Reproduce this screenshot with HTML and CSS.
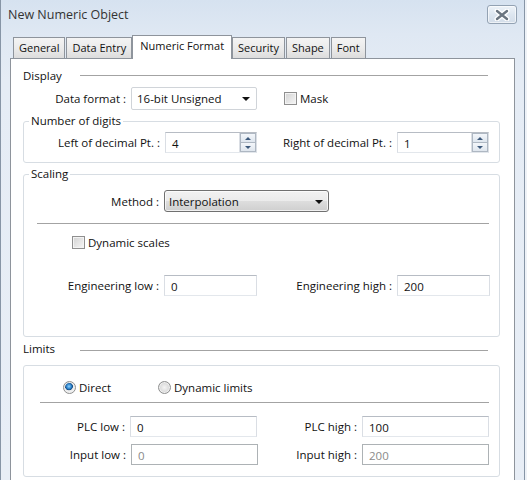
FILE: index.html
```html
<!DOCTYPE html>
<html>
<head>
<meta charset="utf-8">
<title>New Numeric Object</title>
<link rel="stylesheet" href="styles.css">
</head>
<body>
<div class="window">
  <div class="titlebar">
    <span class="title">New Numeric Object</span>
    <div class="close">
      <svg width="16" height="12" viewBox="0 0 16 12">
        <path d="M3 2 L13 10 M13 2 L3 10" stroke="#ffffff" stroke-width="5" stroke-linecap="round"/>
        <path d="M3 2 L13 10 M13 2 L3 10" stroke="#6b7580" stroke-width="2.4" stroke-linecap="round"/>
      </svg>
    </div>
  </div>
  <div class="tabs">
    <div class="tab">General</div>
    <div class="tab">Data Entry</div>
    <div class="tab active">Numeric Format</div>
    <div class="tab">Security</div>
    <div class="tab">Shape</div>
    <div class="tab">Font</div>
  </div>
  <div class="panel">
    <div class="heading"><span class="heading-text">Display</span><span class="rule"></span></div>
    <div class="row row-format">
      <span class="lbl lbl-format">Data format :</span>
      <div class="combo">
        <span>16-bit Unsigned</span>
        <span class="arrow"></span>
      </div>
      <span class="check check-mask"></span>
      <span class="check-text">Mask</span>
    </div>

    <fieldset class="group group-digits">
      <legend>Number of digits</legend>
      <div class="row">
        <span class="lbl lbl-left">Left of decimal Pt. :</span>
        <div class="field spin-field"><span class="val">4</span>
          <div class="spinner"><span class="sp-btn"><span class="up"></span></span><span class="sp-btn"><span class="down"></span></span></div>
        </div>
        <span class="lbl lbl-right">Right of decimal Pt. :</span>
        <div class="field spin-field"><span class="val">1</span>
          <div class="spinner"><span class="sp-btn"><span class="up"></span></span><span class="sp-btn"><span class="down"></span></span></div>
        </div>
      </div>
    </fieldset>

    <fieldset class="group group-scaling">
      <legend>Scaling</legend>
      <div class="row">
        <span class="lbl lbl-method">Method :</span>
        <div class="dropbtn"><span>Interpolation</span><span class="arrow"></span></div>
      </div>
      <div class="sep sep-scaling"></div>
      <div class="row row-dyn">
        <span class="check"></span><span class="check-text">Dynamic scales</span>
      </div>
      <div class="row row-eng">
        <span class="lbl lbl-englow">Engineering low :</span>
        <div class="field field-eng"><span class="val">0</span></div>
        <span class="lbl lbl-enghigh">Engineering high :</span>
        <div class="field field-eng"><span class="val">200</span></div>
      </div>
    </fieldset>

    <div class="heading heading-limits"><span class="heading-text">Limits</span><span class="rule"></span></div>

    <div class="group group-limits">
      <div class="row row-radios">
        <span class="radio-item radio-direct"><span class="radio checked"></span><span class="check-text">Direct</span></span>
        <span class="radio-item"><span class="radio"></span><span class="check-text">Dynamic limits</span></span>
      </div>
      <div class="sep sep-limits"></div>
      <div class="row row-plc">
        <span class="lbl lbl-plclow">PLC low :</span>
        <div class="field field-lim"><span class="val">0</span></div>
        <span class="lbl lbl-plchigh">PLC high :</span>
        <div class="field field-lim"><span class="val">100</span></div>
      </div>
      <div class="row row-input">
        <span class="lbl lbl-inlow">Input low :</span>
        <div class="field field-lim disabled"><span class="val">0</span></div>
        <span class="lbl lbl-inhigh">Input high :</span>
        <div class="field field-lim disabled"><span class="val">200</span></div>
      </div>
    </div>
  </div>
</div>
</body>
</html>
```

FILE: styles.css
```css
* { box-sizing: border-box; }

html, body {
  margin: 0;
  background: #eef2f7;
}

body {
  font-family: "Open Sans", "Noto Sans", sans-serif;
  font-size: 11.5px;
  color: #111;
}

.window {
  width: 525px;
  height: 480px;
  overflow: hidden;
  background: linear-gradient(#d6e2f0 0px, #dfe8f3 34px, #e5ecf5 80px, #e8eef6 480px);
  border-left: 1px solid #8795a6;
  border-right: 1px solid #8795a6;
}

/* Title bar */
.titlebar {
  height: 35px;
  display: flex;
  align-items: flex-start;
  justify-content: space-between;
  padding: 5px 7px 0 7px;
}

.title {
  font-size: 12.5px;
  color: #333;
  line-height: 20px;
}

.close {
  width: 30px;
  height: 19px;
  border: 1px solid #93a2b3;
  border-radius: 3px;
  background: linear-gradient(#eef3f9, #dde6f0 50%, #d3dde9);
  box-shadow: inset 0 0 0 1px rgba(255,255,255,0.6);
  display: flex;
  align-items: center;
  justify-content: center;
}

/* Tabs */
.tabs {
  height: 23px;
  display: flex;
  align-items: flex-end;
  padding-left: 12px;
  position: relative;
  z-index: 1;
  font-size: 11px;
}

.tab {
  height: 21px;
  line-height: 20px;
  padding: 0 5px;
  border: 1px solid #8e949c;
  border-bottom: none;
  margin-right: 1px;
  background: linear-gradient(#f4f4f4, #ebebeb 50%, #dcdcdc);
  color: #111;
}

.tab.active {
  height: 24px;
  margin-bottom: -1px;
  margin-left: -1px;
  margin-right: 0;
  padding: 0 7px;
  line-height: 19px;
  background: #fff;
}

/* Panel */
.panel {
  margin-left: 9px;
  width: 505px;
  height: 440px;
  border: 1px solid #8e949c;
  background: #fff;
  padding: 8px 14px 0 12px;
}

.heading {
  display: flex;
  align-items: center;
  height: 16px;
}

.heading-text {
  width: 57px;
  flex: none;
}

.rule {
  flex: 1;
  height: 1px;
  background: #a3a3a3;
  margin-right: 12px;
  margin-top: 1px;
}

.heading-limits .rule { margin-top: 5px; }

.row {
  display: flex;
  align-items: center;
}

.lbl {
  flex: none;
  text-align: right;
  padding-right: 5px;
  white-space: nowrap;
}

.row-format {
  margin-top: 4px;
}

.lbl-format { width: 108px; }

.combo {
  width: 126px;
  height: 23px;
  border: 1px solid #d0d4d9;
  border-radius: 2px;
  display: flex;
  align-items: center;
  justify-content: space-between;
  padding: 0 6px 0 5px;
}

.arrow {
  width: 0;
  height: 0;
  border-left: 4px solid transparent;
  border-right: 4px solid transparent;
  border-top: 4px solid #111;
  margin-top: 1px;
}

.check {
  width: 13px;
  height: 13px;
  flex: none;
  border: 1px solid #8f8f8f;
  background: linear-gradient(135deg, #d2d2d2, #f6f6f6);
  box-shadow: inset 0 0 0 1px #f3f3f3;
}

.check-mask { margin-left: 27px; }

.check-text {
  margin-left: 3px;
  white-space: nowrap;
}

/* Group boxes */
.group {
  margin: 0;
  padding: 0;
  border: 1px solid #d7dde3;
  border-radius: 3px;
  min-width: 0;
}

.group legend {
  padding: 0 2px;
  margin-left: 5px;
  line-height: 16px;
}

.group-digits {
  margin-top: 3px;
  padding: 3px 0 9px;
}

.lbl-left { width: 141px; }
.lbl-right { width: 140px; }

.field {
  height: 21px;
  border: 1px solid;
  border-color: #b7bcc4 #dadee4 #e3e7ec #dadee4;
  background: #fff;
  display: flex;
  align-items: center;
  padding-left: 6px;
  flex: none;
}

.spin-field {
  width: 92px;
  justify-content: space-between;
  padding-right: 0;
}

.val { padding-top: 1px; }

.spinner {
  width: 17px;
  height: 19px;
  display: flex;
  flex-direction: column;
  border-left: 1px solid #dadee4;
}

.sp-btn {
  flex: 1;
  border: 1px solid #aeb7c2;
  background: linear-gradient(#f3f6fa, #dfe6ee);
  display: flex;
  align-items: center;
  justify-content: center;
}

.sp-btn + .sp-btn { border-top: none; }

.up, .down {
  width: 0;
  height: 0;
  border-left: 3px solid transparent;
  border-right: 3px solid transparent;
}
.up { border-bottom: 3px solid #3e5a7c; }
.down { border-top: 3px solid #3e5a7c; }

.group-scaling {
  margin-top: 3px;
  padding: 8px 0 40px;
}

.lbl-method { width: 140px; }

.dropbtn {
  width: 165px;
  height: 22px;
  border: 1px solid #707070;
  border-radius: 3px;
  background: linear-gradient(#f2f2f2, #ebebeb 50%, #dddddd 51%, #cfcfcf);
  box-shadow: inset 0 0 0 1px rgba(255,255,255,0.7);
  display: flex;
  align-items: center;
  justify-content: space-between;
  padding: 0 5px 0 4px;
}

.sep {
  height: 1px;
  background: #a3a3a3;
}

.sep-scaling {
  margin: 11px 10px 0 13px;
}

.row-dyn {
  margin-top: 10px;
  height: 16px;
  padding-left: 48px;
}

.row-eng { margin-top: 25px; }
.lbl-englow { width: 140px; }
.lbl-enghigh { width: 140px; }
.field-eng { width: 93px; }

.heading-limits { margin-top: 3px; }

.group-limits {
  margin-top: 9px;
  padding: 13px 0 11px;
}

.row-radios {
  height: 16px;
  padding-left: 39px;
}

.radio-item {
  display: flex;
  align-items: center;
}

.radio-direct { width: 95px; }

.radio {
  width: 13px;
  height: 13px;
  border-radius: 50%;
  border: 1px solid #8e8f8f;
  background: radial-gradient(circle at 50% 50%, #f4f4f4 0, #d9d9d9 5px, #c8c8c8 6px);
  box-shadow: inset 0 0 0 1px #f0f0f0;
  flex: none;
}

.radio.checked {
  background: radial-gradient(circle at 45% 40%, #8fd3ff 0, #2a80c8 2.5px, #144b83 3.6px, #eaeaea 4.2px, #f2f2f2 6px);
}

.sep-limits { margin: 7px 10px 0 16px; }

.row-plc { margin-top: 13px; }
.row-input { margin-top: 7px; }

.lbl-plclow { width: 106px; }
.lbl-plchigh { width: 105px; }
.lbl-inlow { width: 107px; }
.lbl-inhigh { width: 104px; }
.field-lim { width: 127px; }

.field.disabled {
  border-color: #adb2b5;
  color: #8a8a8a;
}
```
